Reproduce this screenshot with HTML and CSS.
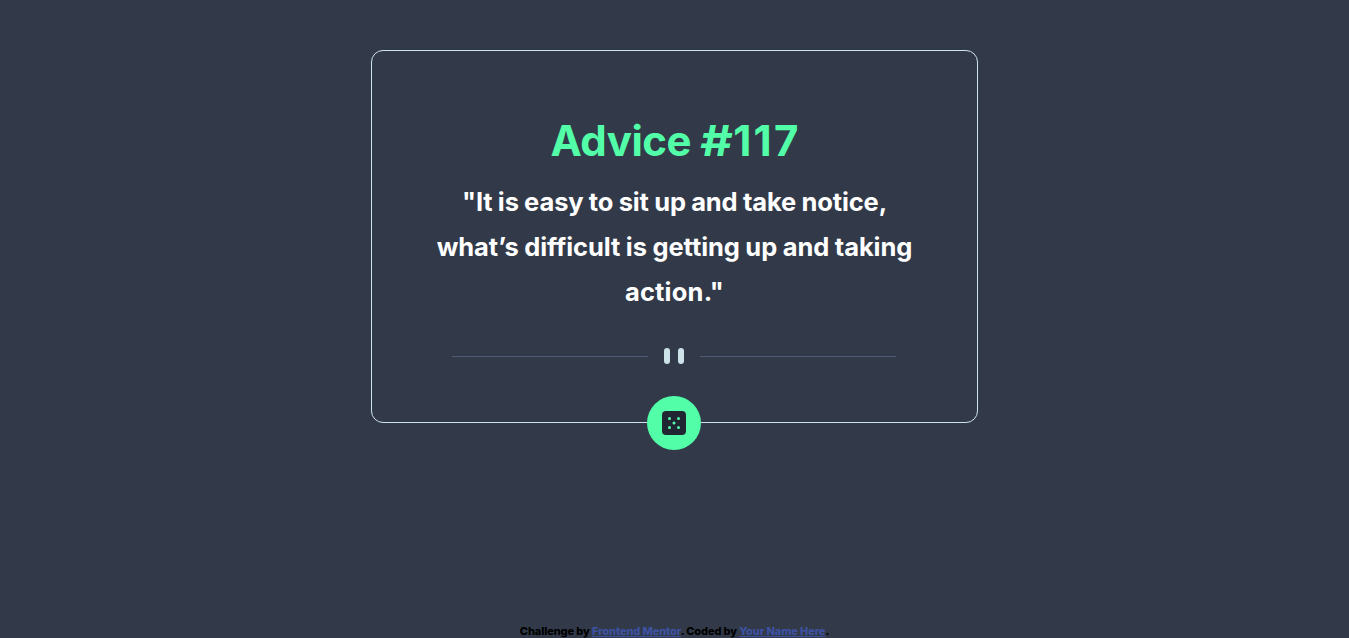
FILE: index.html
```html
<!DOCTYPE html>
<html lang="en">
<head>
<meta charset="utf-8">
<title>Advice generator</title>
<link rel="stylesheet" href="styles.css">
</head>
<body>
<main class="card">
  <h1 class="title"><span class="label">Advice</span> <span class="number"><span class="hash">#</span>117</span></h1>
  <p class="quote"><span class="line line-1">"It is easy to sit up and take notice,</span><span class="line line-2">what’s difficult is getting up and taking</span><span class="line line-3">action."</span></p>
  <svg class="divider" width="444" height="16" viewBox="0 0 444 16"><path fill="#4F5D74" d="M0 8h196v1H0zM248 8h196v1H248z"/><g fill="#CEE3E9" transform="translate(212)"><rect width="6" height="16" rx="3"/><rect x="14" width="6" height="16" rx="3"/></g></svg>
  <button class="dice" aria-label="New advice"><svg width="24" height="24" viewBox="0 0 24 24"><path d="M20 0H4a4.005 4.005 0 0 0-4 4v16a4.005 4.005 0 0 0 4 4h16a4.005 4.005 0 0 0 4-4V4a4.005 4.005 0 0 0-4-4ZM7.500 18a1.500 1.500 0 1 1 0-3 1.500 1.500 0 0 1 0 3Zm0-9a1.500 1.500 0 1 1 0-3 1.500 1.500 0 0 1 0 3Zm4.500 4.500a1.500 1.500 0 1 1 0-3 1.500 1.500 0 0 1 0 3Zm4.500 4.500a1.500 1.500 0 1 1 0-3 1.500 1.500 0 0 1 0 3Zm0-9a1.500 1.500 0 1 1 0-3 1.500 1.500 0 0 1 0 3Z" fill="#202733"/></svg></button>
</main>
<footer class="attribution"><span class="credit">Challenge by <a href="#">Frontend Mentor</a>. Coded by <a href="#">Your Name Here</a>.</span></footer>
</body>
</html>
```
FILE: styles.css
```css
* { box-sizing: border-box; }
body { margin: 0; height: 638px; overflow: hidden; background: #323a49; font-family: Inter, sans-serif; font-weight: 800; display: flex; flex-direction: column; align-items: center; padding-top: 50px; }
.card { width: 607px; height: 373px; border: 1px solid #cee3e9; border-radius: 12px; display: flex; flex-direction: column; align-items: center; padding-top: 60px; position: relative; }
.title { margin: 0; font-size: 42px; line-height: 60px; font-weight: 700; color: #52ffa8; white-space: nowrap; }
.label { letter-spacing: -0.5px; }
.number { letter-spacing: 2.2px; margin-right: -2px; }
.hash { display: inline-block; transform: scaleX(1.2); margin: 0 3px 0 2px; letter-spacing: 0; }
.quote { margin: 8px 0 0; font-size: 25.5px; line-height: 45px; font-weight: 700; color: #fff; text-align: center; }
.line { display: block; white-space: nowrap; }
.line-1 { letter-spacing: -0.12px; word-spacing: -0.6px; }
.line-2 { letter-spacing: -0.1px; word-spacing: -0.3px; }
.line-3 { letter-spacing: 0.2px; }
.divider { margin: 34px 1px 0 0; display: block; }
.dice { position: absolute; left: 275px; top: 345px; width: 54px; height: 54px; border: 0; border-radius: 50%; padding: 0; background: #52ffa8; display: flex; align-items: center; justify-content: center; }
.attribution { margin-top: auto; font-size: 11px; line-height: 14px; color: #000; letter-spacing: -0.11px; }
.attribution a { color: #3e52a3; }
```
